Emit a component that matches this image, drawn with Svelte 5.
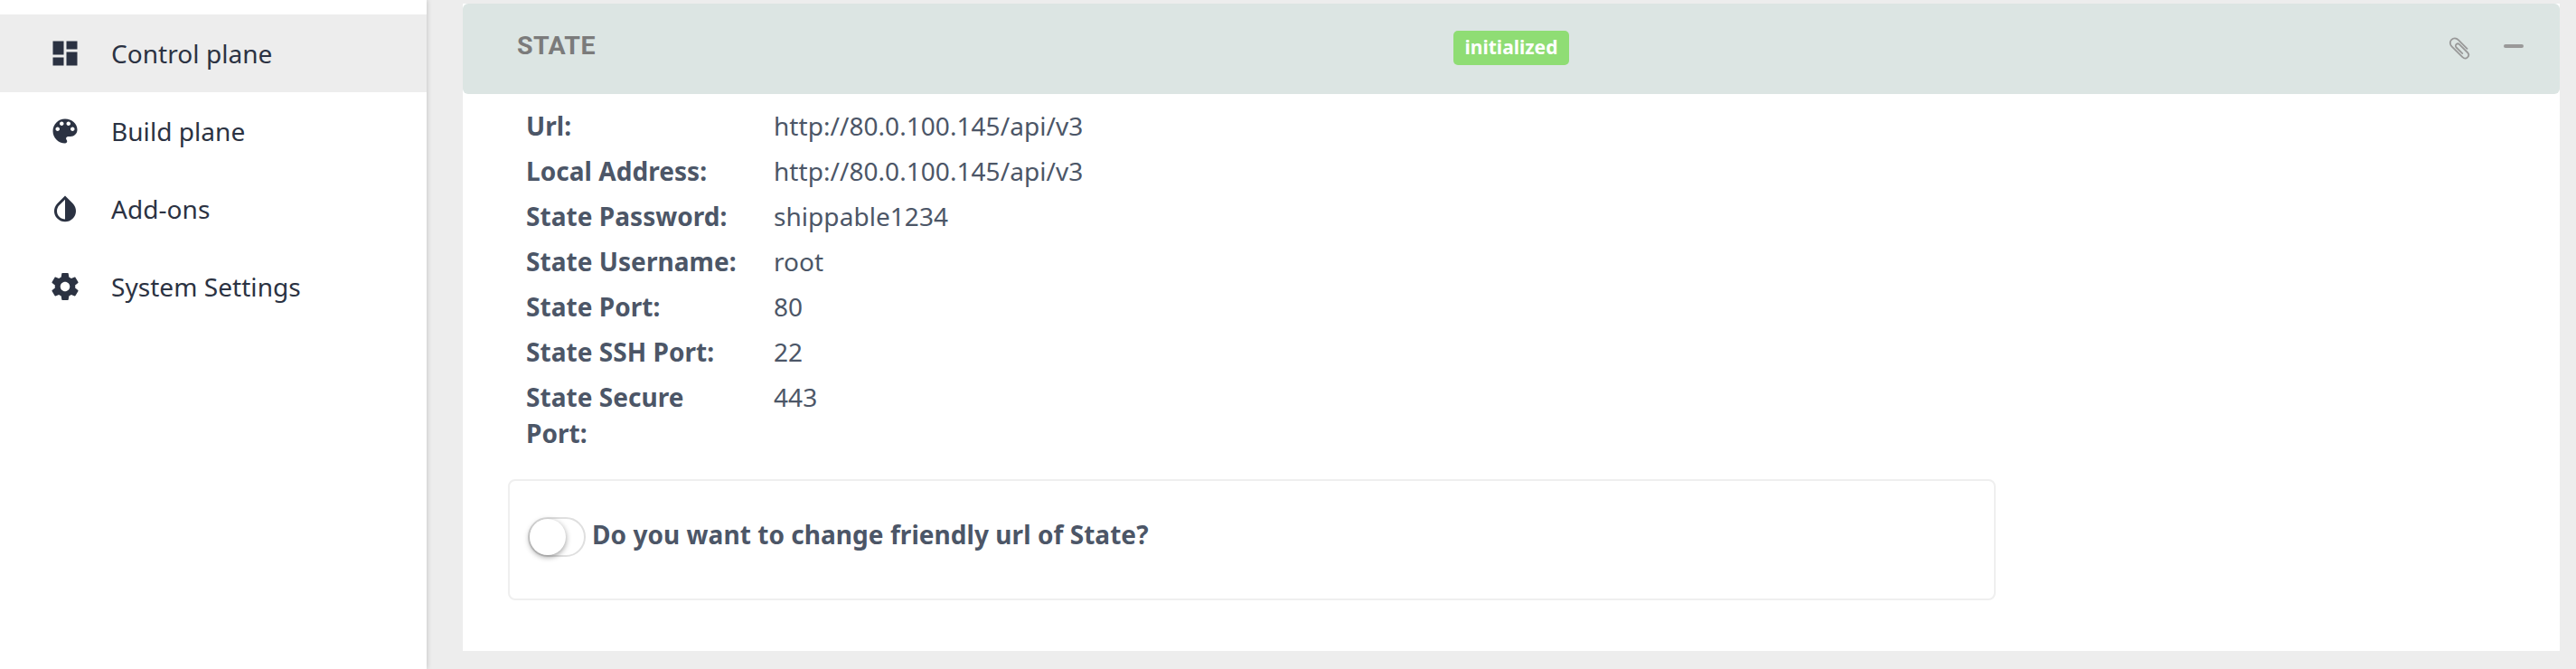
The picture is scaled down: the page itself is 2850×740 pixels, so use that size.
<script>
  const nav = [
    { label: 'Control plane', icon: 'M3 13h8V3H3v10zm0 8h8v-6H3v6zm10 0h8V11h-8v10zm0-18v6h8V3h-8z', active: true },
    { label: 'Build plane', icon: 'M12 3c-4.97 0-9 4.03-9 9s4.03 9 9 9c.83 0 1.5-.67 1.5-1.5 0-.39-.15-.74-.39-1.01-.23-.26-.38-.61-.38-.99 0-.83.67-1.5 1.5-1.5H16c2.76 0 5-2.24 5-5 0-4.42-4.03-8-9-8zm-5.5 9c-.83 0-1.5-.67-1.5-1.5S5.67 9 6.5 9 8 9.67 8 10.5 7.33 12 6.5 12zm3-4C8.67 8 8 7.33 8 6.5S8.67 5 9.5 5s1.5.67 1.5 1.5S10.33 8 9.5 8zm5 0c-.83 0-1.5-.67-1.5-1.5S13.67 5 14.5 5s1.5.67 1.5 1.5S15.33 8 14.5 8zm3 4c-.83 0-1.5-.67-1.5-1.5S16.67 9 17.5 9s1.5.67 1.5 1.5-.67 1.5-1.5 1.5z' },
    { label: 'Add-ons', icon: 'M17.66 7.93L12 2.27 6.34 7.93c-3.12 3.12-3.12 8.19 0 11.31C7.9 20.8 9.95 21.58 12 21.58c2.05 0 4.1-.78 5.66-2.34 3.12-3.12 3.12-8.19 0-11.31zM12 19.59c-1.6 0-3.11-.62-4.24-1.76C6.62 16.69 6 15.19 6 13.59s.62-3.11 1.76-4.24L12 5.1v14.49z' },
    { label: 'System Settings', icon: 'M19.43 12.98c.04-.32.07-.64.07-.98s-.03-.66-.07-.98l2.11-1.65c.19-.15.24-.42.12-.64l-2-3.46c-.12-.22-.39-.3-.61-.22l-2.49 1c-.52-.4-1.08-.73-1.69-.98l-.38-2.65C14.46 2.18 14.25 2 14 2h-4c-.25 0-.46.18-.49.42l-.38 2.65c-.61.25-1.17.59-1.69.98l-2.49-1c-.23-.09-.49 0-.61.22l-2 3.46c-.13.22-.07.49.12.64l2.11 1.65c-.04.32-.07.65-.07.98s.03.66.07.98l-2.11 1.65c-.19.15-.24.42-.12.64l2 3.46c.12.22.39.3.61.22l2.49-1c.52.4 1.08.73 1.69.98l.38 2.65c.03.24.24.42.49.42h4c.25 0 .46-.18.49-.42l.38-2.65c.61-.25 1.17-.59 1.69-.98l2.49 1c.23.09.49 0 .61-.22l2-3.46c.12-.22.07-.49-.12-.64l-2.11-1.65zM12 15.5c-1.93 0-3.5-1.57-3.5-3.5s1.57-3.5 3.5-3.5 3.5 1.57 3.5 3.5-1.57 3.5-3.5 3.5z' }
  ];
  const fields = [
    ['Url:', 'http://80.0.100.145/api/v3'],
    ['Local Address:', 'http://80.0.100.145/api/v3'],
    ['State Password:', 'shippable1234'],
    ['State Username:', 'root'],
    ['State Port:', '80'],
    ['State SSH Port:', '22'],
    ['State Secure Port:', '443']
  ];
  let friendly = $state(false);
</script>

<div class="page">
  <nav class="sidebar">
    {#each nav as item}
      <a class="item" class:active={item.active} href="#top">
        <svg viewBox="0 0 24 24" width="36" height="36"><path d={item.icon} /></svg>
        <span>{item.label}</span>
      </a>
    {/each}
  </nav>
  <main>
    <section class="card">
      <header>
        <h2>STATE</h2>
        <span class="badge">initialized</span>
        <div class="tools">
          <svg class="clip" viewBox="0 0 24 26" width="24" height="26"><path d="M20.5 12.8 L10.8 3.2 C8.6 1 5.4 .9 3.3 2.9 C1.2 5 1.3 8.1 3.5 10.3 L15.4 22.1 C17.1 23.8 19.4 23.9 21 22.4 C22.6 20.8 22.5 18.6 20.9 17 L12 8.2 C11 7.2 9.5 7.2 8.5 8.1 C7.6 9 7.6 10.5 8.6 11.5 L15.3 18.1" /></svg>
          <span class="minus"></span>
        </div>
      </header>
      <dl>
        {#each fields as [name, value]}
          <div class="row"><dt>{name}</dt><dd>{value}</dd></div>
        {/each}
      </dl>
      <div class="option">
        <button class="switch" class:on={friendly} aria-label="Friendly url" onclick={() => (friendly = !friendly)}><span class="knob"></span></button>
        <strong>Do you want to change friendly url of State?</strong>
      </div>
    </section>
  </main>
</div>

<style>
  :global(body) { margin: 0; }
  .page { display: flex; width: 2850px; height: 740px; overflow: hidden; background: #ededed; font: 28px/40px "Noto Sans", sans-serif; color: #4c5667; box-sizing: border-box; }
  .sidebar { width: 472px; padding-top: 16px; box-sizing: border-box; background: #fff; box-shadow: 0 0 6px rgba(0, 0, 0, .2); }
  .item { display: flex; align-items: center; gap: 33px; height: 86px; padding-left: 54px; color: #2b3242; text-decoration: none; letter-spacing: .05px; }
  .item.active { background: #ededed; }
  .item svg { fill: #2b3242; }
  main { flex: 1; padding: 4px 18px 20px 40px; }
  .card { height: 716px; background: #fff; }
  header { display: grid; grid-template-columns: 1036px 1fr auto; align-items: start; height: 100px; padding: 26px 40px 0 60px; box-sizing: border-box; background: #dce5e3; border-radius: 6px; }
  h2 { margin: 0; font: bold 28.5px/42px Roboto, sans-serif; letter-spacing: .4px; color: #7b7b7b; }
  .badge { justify-self: start; margin-top: 4px; width: 128px; height: 38px; border-radius: 5px; background: #8fdd74; color: #fff; font-size: 21px; font-weight: 700; line-height: 37px; text-align: center; }
  .tools { display: flex; align-items: flex-start; gap: 37px; }
  .clip { margin-top: 11px; fill: none; stroke: #999; stroke-width: 1.8; stroke-linecap: round; }
  .minus { width: 22px; height: 4px; margin-top: 19px; border-radius: 2px; background: #999; }
  dl { margin: 0; padding: 15px 70px 0; letter-spacing: .05px; }
  .row { display: grid; grid-template-columns: 244px 1fr; column-gap: 30px; padding-bottom: 10px; }
  dt { font-weight: 700; }
  dd { margin: 0; }
  .option { display: flex; align-items: flex-start; gap: 7px; width: 1646px; height: 134px; margin: 21px 0 0 50px; padding: 40px 20px 0; box-sizing: border-box; border: 2px solid #efefef; border-radius: 8px; }
  .option strong { line-height: 38px; letter-spacing: .05px; }
  .switch { display: flex; width: 64px; height: 44px; padding: 0; border: 2px solid #dfdfdf; border-radius: 22px; background: #fff; box-sizing: border-box; }
  .switch.on { justify-content: flex-end; background: #64bd63; }
  .knob { width: 40px; height: 40px; border-radius: 50%; background: #fff; box-shadow: 0 2px 6px rgba(0, 0, 0, .4); }
</style>
